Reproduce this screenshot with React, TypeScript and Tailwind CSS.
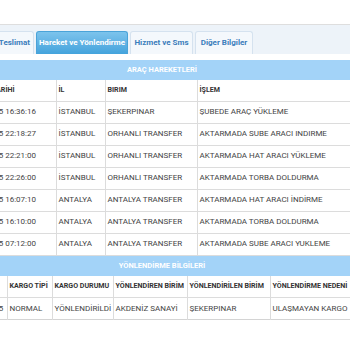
import React from "react";

const moves = [
  ["10.10.2015 16:36:16", "İSTANBUL", "ŞEKERPINAR", "ŞUBEDE ARAÇ YÜKLEME"],
  ["10.10.2015 22:18:27", "İSTANBUL", "ORHANLI TRANSFER", "AKTARMADA SUBE ARACI INDIRME"],
  ["10.10.2015 22:21:00", "İSTANBUL", "ORHANLI TRANSFER", "AKTARMADA HAT ARACI YÜKLEME"],
  ["10.10.2015 22:26:00", "İSTANBUL", "ORHANLI TRANSFER", "AKTARMADA TORBA DOLDURMA"],
  ["11.10.2015 16:07:10", "ANTALYA", "ANTALYA TRANSFER", "AKTARMADA HAT ARACI İNDİRME"],
  ["11.10.2015 16:10:00", "ANTALYA", "ANTALYA TRANSFER", "AKTARMADA TORBA DOLDURMA"],
  ["12.10.2015 07:12:00", "ANTALYA", "ANTALYA TRANSFER", "AKTARMADA SUBE ARACI YUKLEME"],
];

function Tab({ label, active, className }: { label: string; active?: boolean; className?: string }) {
  return (
    <div
      className={`h-[23px] flex items-center rounded-t-[3px] border border-b-0 font-bold text-[8px] whitespace-nowrap ${
        active
          ? "bg-gradient-to-b from-[#7cc3ec] to-[#43a3dc] border-[#4aa3d8] text-white"
          : "bg-[#f4f8fc] border-[#d5e2ef] text-[#3b7dbb]"
      } ${className ?? ""}`}
    >
      {label}
    </div>
  );
}

function Bar({ title }: { title: string }) {
  return (
    <div className="h-[20px] bg-[#a3d3f8] flex items-center justify-center text-white font-bold text-[7.5px]">
      {title}
    </div>
  );
}

const th = "text-left font-bold text-[7.1px] pl-[2px] whitespace-nowrap overflow-hidden";
const td = "pl-[2px] whitespace-nowrap overflow-hidden";
const line = "border-l border-[#dcdcdc]";

export default function App() {
  return (
    <div className="w-[350px] h-[350px] overflow-hidden bg-white text-[#444] text-[8px] font-['Roboto',sans-serif]">
      <div className="h-[25px] border-b border-[#dedede]" />
      <div className="ml-[-40px] w-[404px]">
        <div className="h-[30px] bg-[#edf3f9] flex items-end gap-[2px] border-b border-white">
          <Tab label="Teslimat" className="w-[74px] justify-end pr-[3px]" />
          <Tab label="Hareket ve Yönlendirme" active className="w-[92px] justify-center" />
          <Tab label="Hizmet ve Sms" className="w-[63px] justify-center" />
          <Tab label="Diğer Bilgiler" className="w-[58px] justify-center" />
        </div>
        <div className="h-[5px]" />
        <Bar title="ARAÇ HAREKETLERİ" />
        <table className="w-full table-fixed border-collapse">
          <colgroup>
            <col className="w-[96px]" />
            <col className="w-[49px]" />
            <col className="w-[92px]" />
            <col />
          </colgroup>
          <thead>
            <tr className="h-[21px] border-b border-[#dcdcdc] text-[#333]">
              {["İŞLEM TARİHİ", "İL", "BIRIM", "İŞLEM"].map((h, i) => (
                <th key={h} className={`${th} ${i > 0 ? line : "pl-[10px]"}`}>
                  {h}
                </th>
              ))}
            </tr>
          </thead>
          <tbody>
            {moves.map((r) => (
              <tr key={r[0]} className="h-[22px] border-b border-[#dcdcdc]">
                {r.map((c, i) => (
                  <td key={i} className={`${td} ${i > 0 ? line : "pl-[3px]"}`}>
                    {c}
                  </td>
                ))}
              </tr>
            ))}
          </tbody>
        </table>
        <Bar title="YÖNLENDİRME BİLGİLERİ" />
        <table className="w-full table-fixed border-collapse">
          <colgroup>
            <col className="w-[47px]" />
            <col className="w-[45px]" />
            <col className="w-[61px]" />
            <col className="w-[74px]" />
            <col className="w-[83px]" />
            <col />
          </colgroup>
          <thead>
            <tr className="h-[22px] border-b border-[#dcdcdc] text-[#333]">
              {["TARİH", "KARGO TİPİ", "KARGO DURUMU", "YÖNLENDİREN BİRİM", "YÖNLENDİRİLEN BİRİM", "YÖNLENDİRME NEDENİ"].map((h, i) => (
                <th key={h} className={`${th} ${i > 0 ? line : ""}`}>
                  {h}
                </th>
              ))}
            </tr>
          </thead>
          <tbody>
            <tr className="h-[22px] border-b border-[#d4d4d4]">
              {["10.10.2015", "NORMAL", "YÖNLENDİRİLDİ", "AKDENİZ SANAYİ", "ŞEKERPINAR", "ULAŞMAYAN KARGO"].map((c, i) => (
                <td key={i} className={`${td} ${i > 0 ? line : "pl-[3px]"}`}>
                  {c}
                </td>
              ))}
            </tr>
          </tbody>
        </table>
      </div>
    </div>
  );
}
